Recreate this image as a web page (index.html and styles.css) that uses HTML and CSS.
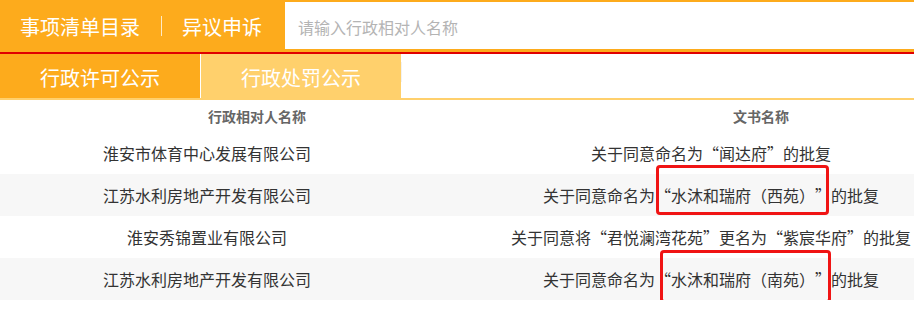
FILE: index.html
```html
<!DOCTYPE html>
<html lang="zh-CN">
<head>
<meta charset="utf-8">
<title>行政处罚公示</title>
<link rel="stylesheet" href="styles.css">
</head>
<body>
<div class="page">
  <header class="topbar">
    <nav class="topnav">
      <span class="topnav-item">事项清单目录</span>
      <span class="topnav-sep"></span>
      <span class="topnav-item">异议申诉</span>
    </nav>
    <input class="search" type="text" placeholder="请输入行政相对人名称">
  </header>
  <div class="tabs">
    <span class="tab tab-active">行政许可公示</span>
    <span class="tab-sep"></span>
    <span class="tab tab-light">行政处罚公示</span>
    <span class="tab-sep tab-sep-faint"></span>
  </div>
  <div class="table-wrap">
    <table class="grid grid-head">
      <colgroup><col class="hc1"><col class="hc2"></colgroup>
      <tr><th>行政相对人名称</th><th>文书名称</th></tr>
    </table>
    <table class="grid grid-body">
      <colgroup><col class="bc1"><col class="bc2"></colgroup>
      <tr><td>淮安市体育中心发展有限公司</td><td>关于同意命名为“闻达府”的批复</td></tr>
      <tr class="alt"><td>江苏水利房地产开发有限公司</td><td>关于同意命名为<span class="mark mark-a">“水沐和瑞府（西苑）”</span>的批复</td></tr>
      <tr><td>淮安秀锦置业有限公司</td><td>关于同意将“君悦澜湾花苑”更名为“紫宸华府”的批复</td></tr>
      <tr class="alt"><td>江苏水利房地产开发有限公司</td><td>关于同意命名为<span class="mark mark-b">“水沐和瑞府（南苑）”</span>的批复</td></tr>
    </table>
  </div>
</div>
</body>
</html>
```

FILE: styles.css
```css
html, body {
  margin: 0;
  padding: 0;
  background: #fff;
  overflow: hidden;
}
.page {
  width: 914px;
  overflow: hidden;
  font-family: "Noto Sans CJK SC", "Microsoft YaHei", sans-serif;
  text-spacing-trim: space-all;
}
.topbar {
  display: flex;
  align-items: flex-start;
  height: 52px;
  background: #fdab1c;
  border-bottom: 2px solid #e00000;
}
.topnav {
  display: flex;
  align-items: center;
  height: 52px;
  padding-left: 20px;
  width: 265px;
  flex-shrink: 0;
}
.topnav-item {
  color: #fff;
  font-size: 20px;
  line-height: 24px;
  position: relative;
  top: 1px;
}
.topnav-sep {
  width: 1px;
  height: 20px;
  margin: 0 20px 0 21px;
  background: rgba(255, 255, 255, 0.75);
}
.search {
  flex: 1;
  margin-top: 2px;
  height: 47px;
  box-sizing: border-box;
  border: 0;
  outline: none;
  padding: 2px 0 0 13px;
  font-family: inherit;
  font-size: 16px;
  color: #333;
  background: #fff;
}
.search::placeholder {
  color: #b4b4b4;
}
.tabs {
  display: flex;
  align-items: center;
  height: 44px;
  border-bottom: 2px solid #ffd06c;
}
.tab {
  width: 200px;
  height: 44px;
  display: flex;
  align-items: center;
  justify-content: center;
  color: #fff;
  font-size: 20px;
  padding-top: 2px;
  box-sizing: border-box;
}
.tab-active {
  background: #fdab1c;
}
.tab-light {
  background: #ffd06c;
}
.tab-sep {
  width: 1px;
  height: 20px;
  margin-top: -8px;
  background: #fff;
}
.tab-sep-faint {
  background: #f2f2f2;
}
.table-wrap {
  width: 914px;
  overflow: hidden;
}
.grid {
  width: 1008px;
  border-collapse: collapse;
  table-layout: fixed;
}
.hc1 { width: 514px; }
.hc2 { width: 494px; }
.bc1 { width: 414px; }
.bc2 { width: 594px; }
.grid th {
  height: 32px;
  padding: 0;
  font-size: 14px;
  font-weight: bold;
  color: #666;
  text-align: center;
  vertical-align: middle;
}
.grid td {
  height: 42px;
  padding: 0;
  font-size: 16px;
  color: #333;
  text-align: center;
  vertical-align: middle;
  white-space: nowrap;
}
.grid tr.alt td {
  background: #f7f7f7;
}
.mark {
  position: relative;
}
.mark::after {
  content: "";
  position: absolute;
  border: 3px solid #f01414;
  border-radius: 4px;
}
.mark-a::after {
  left: 1px;
  right: 2px;
  top: -18px;
  bottom: -8px;
}
.mark-b::after {
  left: 5px;
  right: 0;
  top: -17px;
  bottom: -12px;
}
```
